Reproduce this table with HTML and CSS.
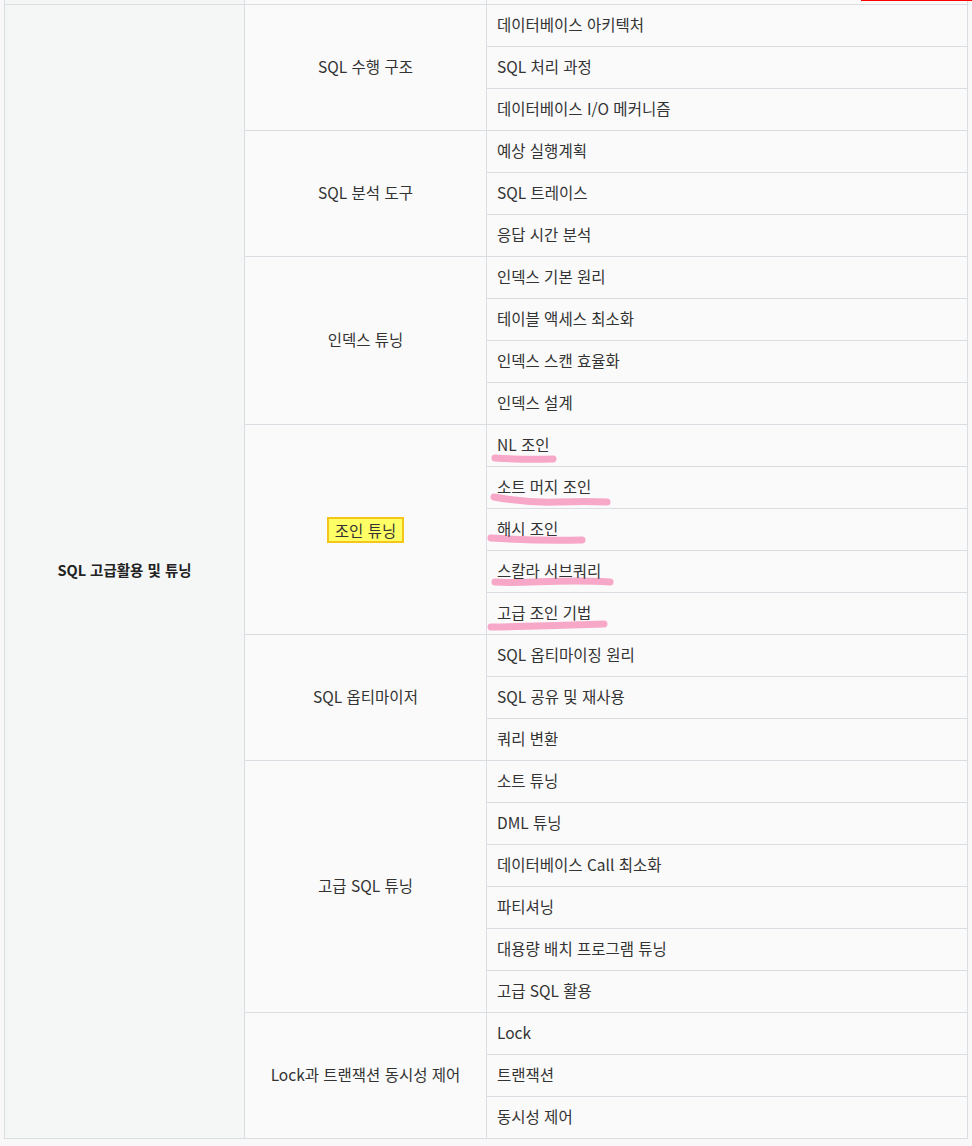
FILE: index.html
```html
<!DOCTYPE html>
<html lang="ko">
<head>
<meta charset="utf-8">
<title>SQL 고급활용 및 튜닝</title>
<link rel="stylesheet" href="styles.css">
</head>
<body>
<div class="topline"></div>
<div class="wrap">
<table class="grid">
  <colgroup>
    <col class="c1">
    <col class="c2">
    <col class="c3">
  </colgroup>
  <tbody>
    <tr class="stub"><td class="subject"></td><td class="topic"></td><td class="item"></td></tr>
    <tr>
      <td class="subject" rowspan="27"><b>SQL 고급활용 및 튜닝</b></td>
      <td class="topic" rowspan="3">SQL 수행 구조</td>
      <td class="item">데이터베이스 아키텍처</td>
    </tr>
    <tr><td class="item">SQL 처리 과정</td></tr>
    <tr><td class="item">데이터베이스 I/O 메커니즘</td></tr>

    <tr><td class="topic" rowspan="3">SQL 분석 도구</td><td class="item">예상 실행계획</td></tr>
    <tr><td class="item">SQL 트레이스</td></tr>
    <tr><td class="item">응답 시간 분석</td></tr>

    <tr><td class="topic" rowspan="4">인덱스 튜닝</td><td class="item">인덱스 기본 원리</td></tr>
    <tr><td class="item">테이블 액세스 최소화</td></tr>
    <tr><td class="item">인덱스 스캔 효율화</td></tr>
    <tr><td class="item">인덱스 설계</td></tr>

    <tr>
      <td class="topic" rowspan="5"><span class="hl">조인 튜닝</span></td>
      <td class="item marked"><svg class="stroke" viewBox="0 0 480 41" width="480" height="41"><path d="M8,33 Q37,35 66,34"/></svg><span class="txt">NL 조인</span></td>
    </tr>
    <tr><td class="item marked"><svg class="stroke" viewBox="0 0 480 41" width="480" height="41"><path d="M7,30 Q40,36 70,35 T120,35"/></svg><span class="txt">소트 머지 조인</span></td></tr>
    <tr><td class="item marked"><svg class="stroke" viewBox="0 0 480 41" width="480" height="41"><path d="M4,29 Q50,32 95,31"/></svg><span class="txt">해시 조인</span></td></tr>
    <tr><td class="item marked"><svg class="stroke" viewBox="0 0 480 41" width="480" height="41"><path d="M8,31 C40,33 70,28 123,31"/></svg><span class="txt">스칼라 서브쿼리</span></td></tr>
    <tr><td class="item marked"><svg class="stroke" viewBox="0 0 480 41" width="480" height="41"><path d="M4,34 Q60,33 117,31"/></svg><span class="txt">고급 조인 기법</span></td></tr>

    <tr><td class="topic" rowspan="3">SQL 옵티마이저</td><td class="item">SQL 옵티마이징 원리</td></tr>
    <tr><td class="item">SQL 공유 및 재사용</td></tr>
    <tr><td class="item">쿼리 변환</td></tr>

    <tr><td class="topic" rowspan="6">고급 SQL 튜닝</td><td class="item">소트 튜닝</td></tr>
    <tr><td class="item">DML 튜닝</td></tr>
    <tr><td class="item">데이터베이스 Call 최소화</td></tr>
    <tr><td class="item">파티셔닝</td></tr>
    <tr><td class="item">대용량 배치 프로그램 튜닝</td></tr>
    <tr><td class="item">고급 SQL 활용</td></tr>

    <tr><td class="topic" rowspan="3">Lock과 트랜잭션 동시성 제어</td><td class="item">Lock</td></tr>
    <tr><td class="item">트랜잭션</td></tr>
    <tr><td class="item">동시성 제어</td></tr>
  </tbody>
</table>
</div>
</body>
</html>
```

FILE: styles.css
```css
html, body {
  margin: 0;
  padding: 0;
  background: #f8f8f8;
}

body {
  font-family: "Noto Sans CJK KR", "Noto Sans", sans-serif;
  font-size: 15.5px;
  color: #333333;
}

.topline {
  position: absolute;
  top: 0;
  left: 861px;
  width: 111px;
  height: 1px;
  background: #ff0000;
}

.wrap {
  padding-left: 4px;
}

.grid {
  border-collapse: collapse;
  table-layout: fixed;
  width: 963px;
}

.c1 { width: 240px; }
.c2 { width: 242px; }
.c3 { width: 481px; }

.grid td {
  border: 1px solid #dadde2;
  height: 37px;
  padding: 0 10px 4px;
  line-height: 20px;
  background: #fafafa;
}

.grid tr.stub td {
  height: 4px;
  border-top: none;
  padding: 0;
}

.grid td.subject {
  background: #f5f6f6;
  text-align: center;
}

.grid td.subject b {
  font-weight: 700;
  font-size: 14.5px;
  color: #222222;
}

.grid td.topic {
  text-align: center;
}

.grid td.item {
  text-align: left;
}

.grid td.marked {
  position: relative;
}

.stroke {
  position: absolute;
  left: 0;
  top: 0;
  pointer-events: none;
}

.stroke path {
  fill: none;
  stroke: #f7a7c7;
  stroke-width: 7;
  stroke-linecap: round;
  stroke-linejoin: round;
}

.txt {
  position: relative;
}

.hl {
  display: inline-block;
  background: #ffff66;
  border: 2px solid #f5c518;
  padding: 2px 6px 1px;
  line-height: 19px;
  position: relative;
  top: 2px;
}
```
